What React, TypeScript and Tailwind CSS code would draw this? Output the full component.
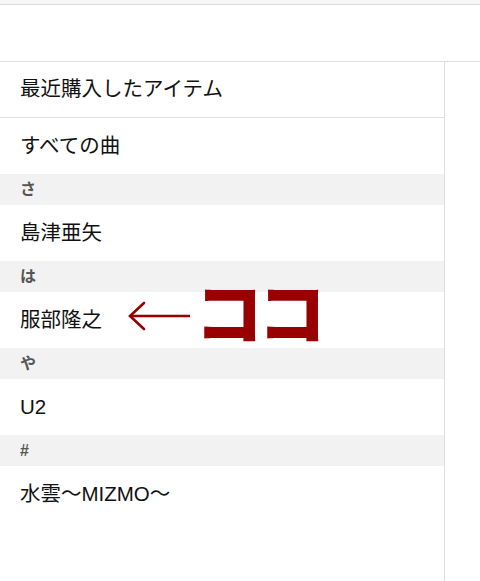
const font = "font-['Liberation_Sans','Noto_Sans_CJK_JP',sans-serif]";

type Item = { kind: "row" | "header"; label: string };

const items: Item[] = [
  { kind: "row", label: "最近購入したアイテム" },
  { kind: "row", label: "すべての曲" },
  { kind: "header", label: "さ" },
  { kind: "row", label: "島津亜矢" },
  { kind: "header", label: "は" },
  { kind: "row", label: "服部隆之" },
  { kind: "header", label: "や" },
  { kind: "row", label: "U2" },
  { kind: "header", label: "#" },
  { kind: "row", label: "水雲〜MIZMO〜" },
];

function Callout() {
  return (
    <>
      <svg width="64" height="30" viewBox="0 0 64 30" className="absolute left-[127px] top-[9px] pointer-events-none">
        <path d="M63 15 H4" stroke="#990000" strokeWidth="2.6" fill="none" />
        <path d="M17 2 L3 15 L17 28" stroke="#990000" strokeWidth="2.6" fill="none" strokeLinecap="round" />
      </svg>
      <span className="absolute left-[195px] top-[-16px] font-['Noto_Sans_CJK_JP',sans-serif] text-[68px] leading-none font-extrabold text-[#990000] tracking-[-5px] pointer-events-none">
        ココ
      </span>
    </>
  );
}

export default function App() {
  return (
    <div className={`${font} w-[480px] h-[581px] bg-white flex flex-col overflow-hidden`}>
      <div className="h-[5px] bg-[#f7f7f7] border-b border-[#dcdcdc] shrink-0" />
      <div className="h-[57px] border-b border-[#dddddd] shrink-0" />
      <div className="flex flex-1">
        <div className="w-[445px] border-r border-[#dddddd]">
          {items.map((it, i) =>
            it.kind === "header" ? (
              <div key={i} className="h-[31px] bg-[#f2f2f2] flex items-center pl-[20px] text-[16px] font-semibold text-[#555555]">
                {it.label}
              </div>
            ) : (
              <div
                key={i}
                className={`relative h-[56px] flex items-center pl-[20px] text-[20.5px] text-[#111111] ${i === 0 ? "border-b border-[#dddddd]" : ""}`}
              >
                {it.label}
                {it.label === "服部隆之" && <Callout />}
              </div>
            )
          )}
        </div>
        <div className="flex-1" />
      </div>
    </div>
  );
}
